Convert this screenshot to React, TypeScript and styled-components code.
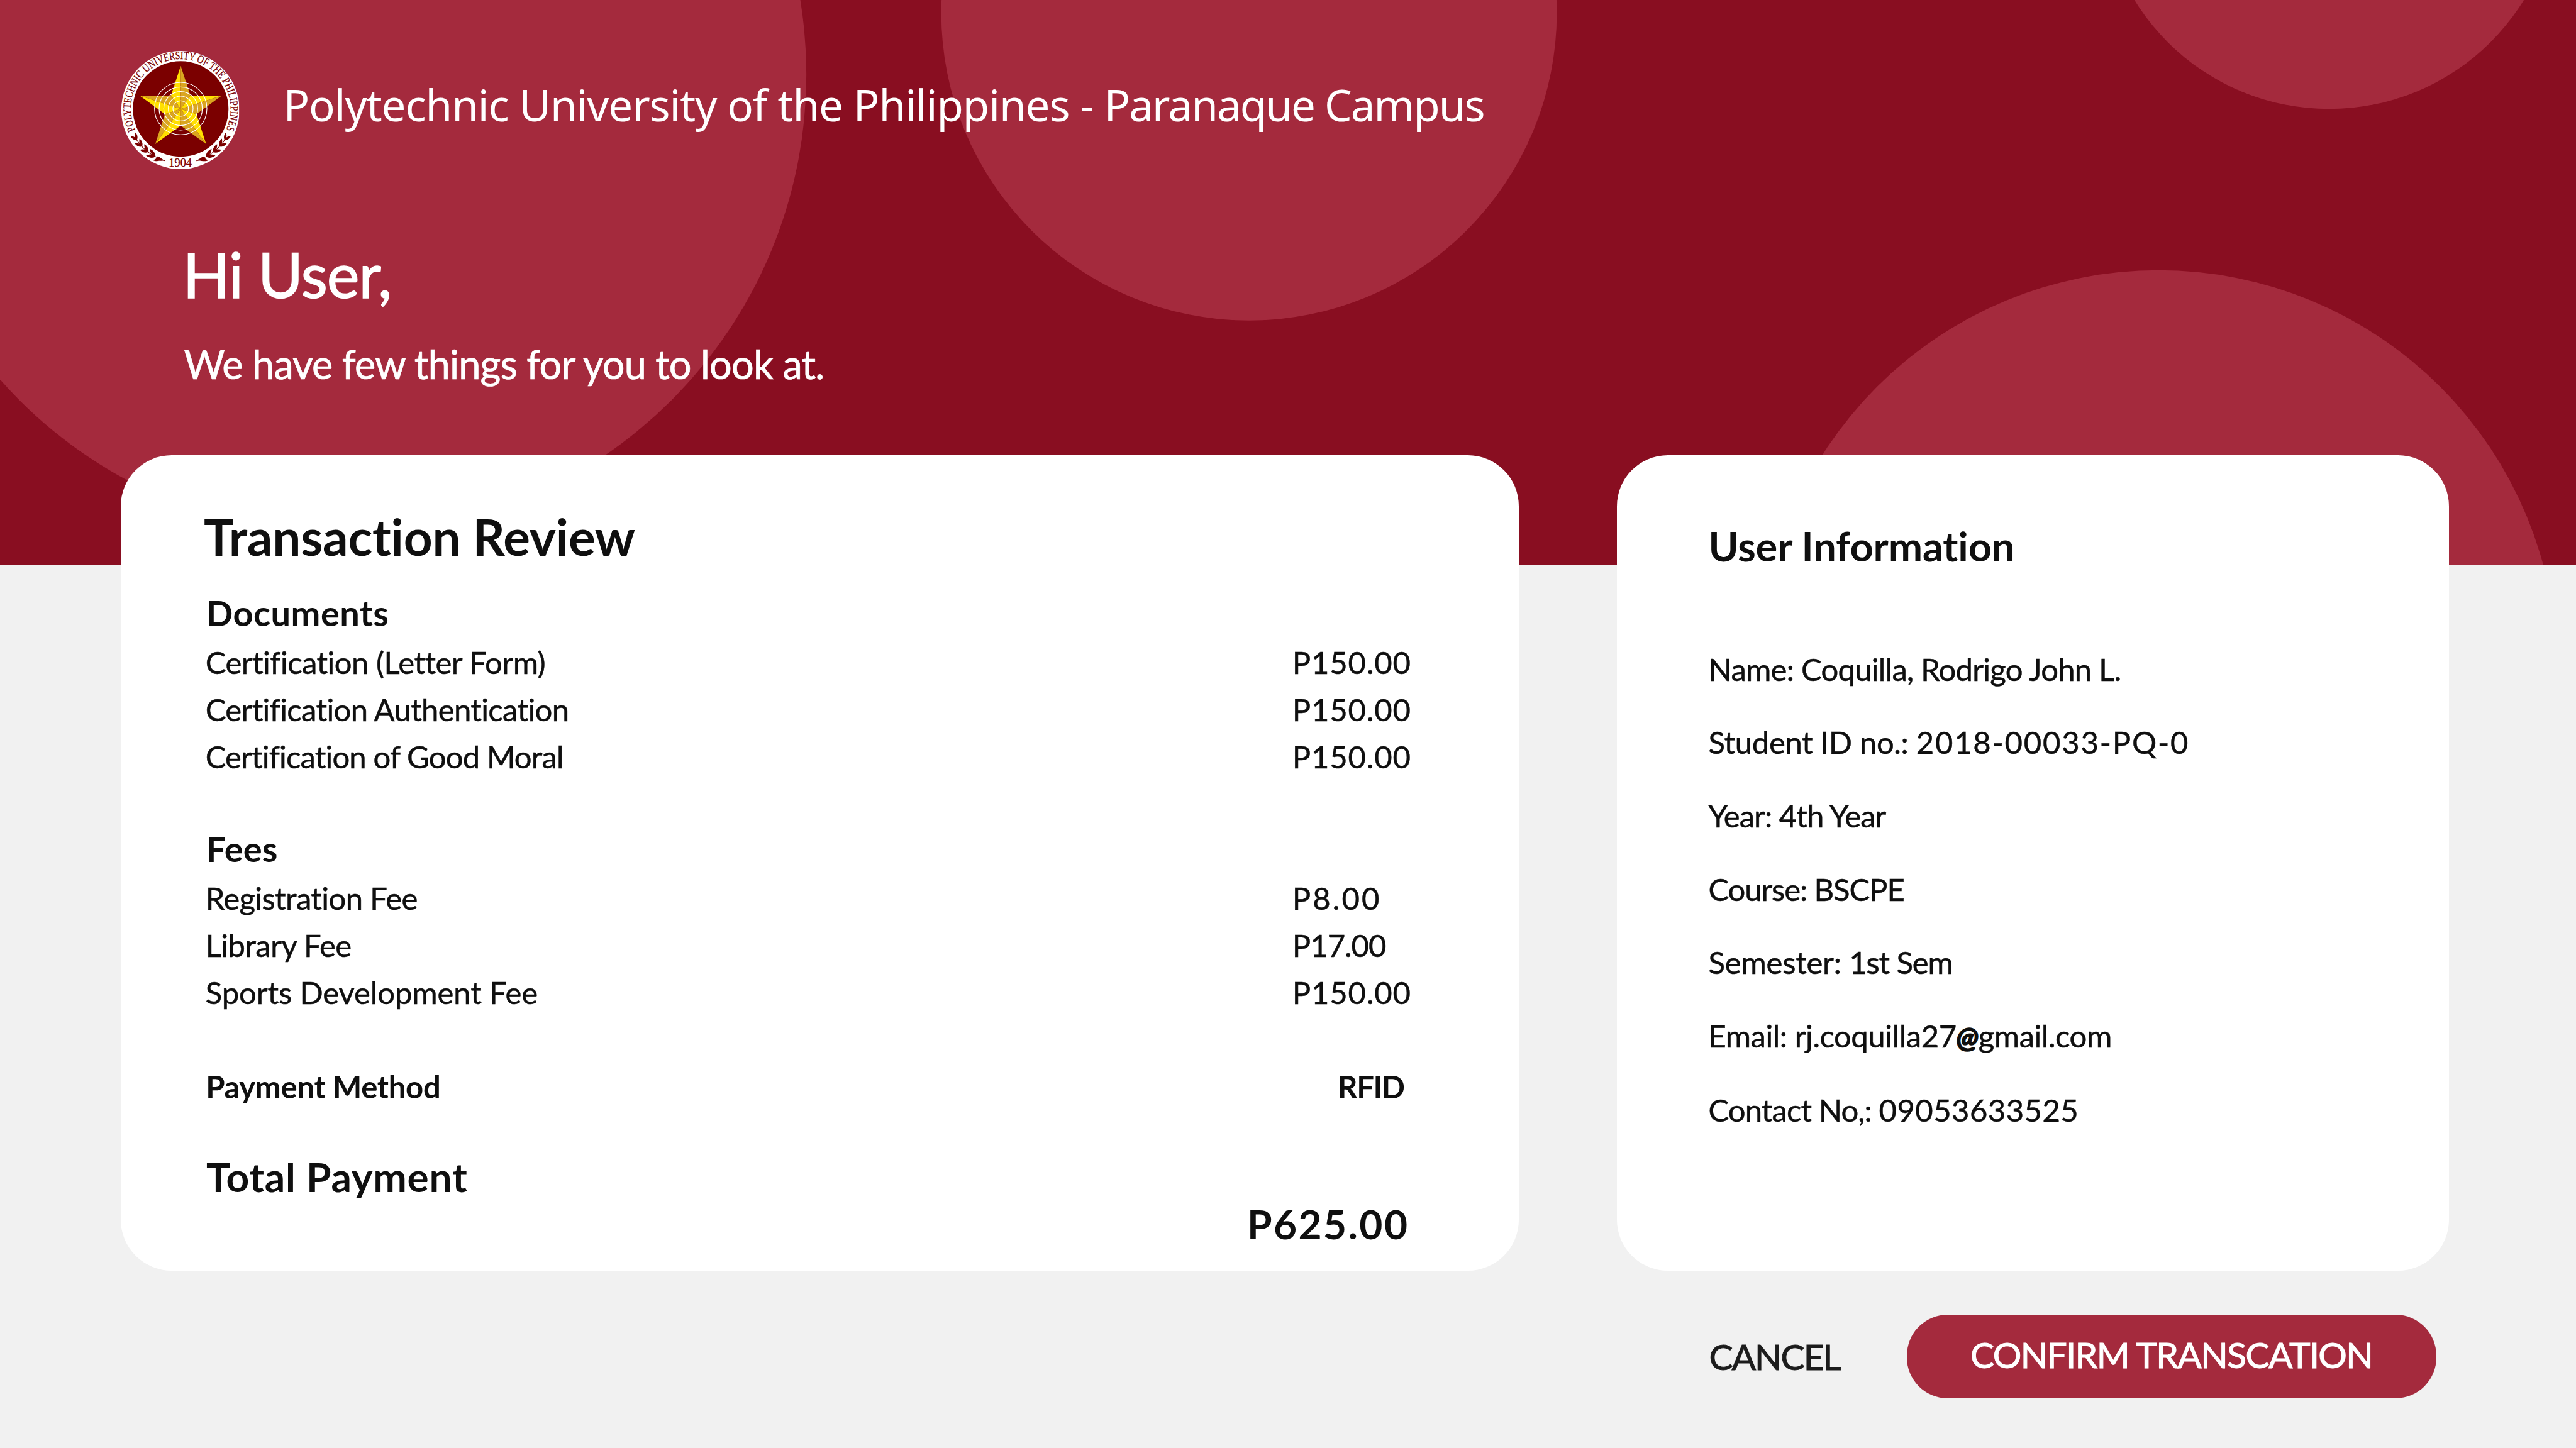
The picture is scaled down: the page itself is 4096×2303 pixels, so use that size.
import React from "react";
import styled, { createGlobalStyle } from "styled-components";

const color = {
  maroon: "#890e21",
  rose: "#a42a3d",
  page: "#f1f1f1",
  card: "#ffffff",
  ink: "#0f0f0f",
};

const GlobalStyle = createGlobalStyle`
  * { box-sizing: border-box; }
  body { margin: 0; background: ${color.page}; }
`;

const Page = styled.div`
  position: relative;
  display: flex;
  flex-direction: column;
  width: 4096px;
  height: 2303px;
  overflow: hidden;
  background: ${color.page};
  color: ${color.ink};
  font-family: Lato, "Open Sans", sans-serif;
  white-space: nowrap;
`;

const HeroArt = styled.svg`
  position: absolute;
  top: 0;
  left: 0;
  width: 4096px;
  height: 898.6px;
  background: ${color.maroon};
`;

const Brand = styled.header`
  position: relative;
  display: flex;
  align-items: center;
  height: 187px;
  margin: 80.9px 0 0 192.9px;
  gap: 70.5px;
`;

const SealSvg = styled.svg`
  flex: none;
  width: 187px;
  height: 187px;
  overflow: visible;
`;

const BrandName = styled.h1`
  margin: 0;
  padding-bottom: 16px;
  font: 400 69px/100px "Noto Sans", "Open Sans", sans-serif;
  letter-spacing: -1.04px;
  color: #fff;
`;

const Campus = styled.span`
  letter-spacing: -1.9px;
`;

const Greeting = styled.section`
  position: relative;
  height: 455.8px;
  padding: 109.2px 0 0 290.5px;
  color: #fff;
`;

const Hello = styled.h2`
  margin: 0;
  font-size: 98px;
  font-weight: 400;
  line-height: 118px;
  letter-spacing: -1.1px;
  -webkit-text-stroke: 1.4px currentColor;
`;

const Lead = styled.p`
  margin: 45.6px 0 0 2px;
  font-size: 63px;
  line-height: 76px;
  letter-spacing: -0.82px;
  -webkit-text-stroke: 0.7px currentColor;
`;

const Cards = styled.main`
  position: relative;
  display: flex;
  gap: 156px;
  height: 1297.6px;
  padding-left: 192.1px;
`;

const Card = styled.section`
  border-radius: 81px;
  background: ${color.card};
`;

const ReviewCard = styled(Card)`
  width: 2222.6px;
  padding: 81.4px 0 0 134.6px;
`;

const UserCard = styled(Card)`
  width: 1323.4px;
  padding: 104.9px 0 0 145.8px;
`;

const ReviewTitle = styled.h2`
  margin: 0 0 39.7px -2.8px;
  font-size: 80px;
  font-weight: 700;
  line-height: 96px;
  letter-spacing: -0.18px;
`;

const Line = styled.div<{ $amountWidth?: number }>`
  display: grid;
  grid-template-columns: 1fr ${(p) => p.$amountWidth ?? 359.9}px;
  align-items: center;
  height: 74.96px;
  font-size: 49px;
  line-height: 60px;
  -webkit-text-stroke: 0.5px currentColor;
`;

const StrongLine = styled(Line)`
  padding-left: 0.5px;
  font-weight: 700;
  -webkit-text-stroke: 0;
`;

const GroupTitle = styled.h3`
  display: flex;
  align-items: center;
  height: 74.96px;
  margin: 0;
  padding: 0 0 5.6px 1px;
  font-size: 56px;
  font-weight: 700;
  line-height: 66px;
`;

const TotalLine = styled(Line)`
  padding: 0 0 11.2px 1.3px;
  font-size: 64px;
  font-weight: 700;
  -webkit-text-stroke: 0;
`;

const Gap = styled.div`
  height: 74.96px;
`;

const Text = styled.span<{ $track?: number }>`
  letter-spacing: ${(p) => p.$track ?? 0}px;
`;

const UserTitle = styled.h2`
  margin: 0 0 99.2px;
  font-size: 65px;
  font-weight: 700;
  line-height: 78px;
  letter-spacing: -0.15px;
`;

const Detail = styled.p`
  margin: 0;
  font-size: 49px;
  line-height: 116.61px;
  -webkit-text-stroke: 0.5px currentColor;
`;

const AtSign = styled.b`
  font-weight: 900;
  font-size: 46px;
  font-style: italic;
  -webkit-text-stroke: 1.5px currentColor;
`;

const Actions = styled.footer`
  display: flex;
  align-items: center;
  justify-content: space-between;
  height: 133px;
  margin-top: 69.7px;
  padding: 0 221.9px 0 2717.4px;
`;

const Button = styled.button`
  border: 0;
  padding: 0;
  background: none;
  color: #1c1c1c;
  font: 400 57px/70px Lato, "Open Sans", sans-serif;
  letter-spacing: -2px;
  text-align: left;
  -webkit-text-stroke: 1px currentColor;
`;

const PrimaryButton = styled(Button)`
  width: 841.7px;
  height: 133px;
  padding: 0 0 6px 100.6px;
  border-radius: 65px;
  background: ${color.rose};
  color: #fff;
  letter-spacing: -1.62px;
`;

const bubbles = [
  { cx: 549.6, cy: 118.5, r: 733.2 },
  { cx: 1987, cy: 20.4, r: 489.6 },
  { cx: 3705.3, cy: -189.9, r: 363.3 },
  { cx: 3434, cy: 1063.8, r: 633.8 },
];

const C = { x: 292, y: 286 };
const polar = (r: number, deg: number, cx = C.x, cy = C.y) => {
  const a = (deg * Math.PI) / 180;
  return [cx + r * Math.cos(a), cy + r * Math.sin(a)] as const;
};
const pts = (list: (readonly [number, number])[]) =>
  list.map(([x, y]) => `${x.toFixed(1)},${y.toFixed(1)}`).join(" ");

function Laurel() {
  return (
    <g fill="#7b0000">
      <path d="M74 420Q118 500 217 533" fill="none" stroke="#7b0000" strokeWidth="3.5" />
      {[145, 136, 127, 118].map((deg, i) => {
        const [x, y] = polar(254, deg, 291, 288);
        const size = 0.95 + i * 0.08;
        return [-20, 28].map((turn) => (
          <path
            key={`${deg}${turn}`}
            d="M0 0C9 -10 23 -10 38 -2C25 7 11 7 0 0Z"
            transform={`translate(${x} ${y}) rotate(${deg + 90 + turn}) scale(${size})`}
          />
        ));
      })}
      <path d="M219 534C204 527 196 515 180 512C176 524 168 528 160 530C178 541 200 528 219 534Z" />
    </g>
  );
}

function Seal() {
  return (
    <SealSvg viewBox="9 9 561 561">
      <defs>
        <path id="sealArc" d="M76.3 386.6A238 238 0 1 1 507.7 386.6" />
        <clipPath id="sealEdge">
          <rect x="8" y="8" width="562.5" height="562" />
        </clipPath>
      </defs>
      <circle cx="290.5" cy="291" r="282" fill="#fff" clipPath="url(#sealEdge)" />
      <circle cx={C.x} cy={C.y} r="228" fill="#7b0000" />
      {[0, 1, 2, 3, 4].map((i) => {
        const tip = -90 + i * 72;
        return (
          <g key={i}>
            <polygon points={pts([[C.x, C.y], polar(206, tip), polar(79, tip - 36)])} fill="#ffe000" />
            <polygon points={pts([[C.x, C.y], polar(206, tip), polar(79, tip + 36)])} fill="#daa520" />
          </g>
        );
      })}
      {[125, 103, 81, 59, 37].map((r) => (
        <circle key={r} cx={C.x} cy="284" r={r} fill="none" stroke="#fff" strokeWidth="3.5" />
      ))}
      <text
        fill="#7b0000"
        stroke="#7b0000"
        strokeWidth="0.8"
        fontFamily="'Liberation Serif', serif"
        fontSize="53"
      >
        <textPath href="#sealArc" textLength="953" lengthAdjust="spacingAndGlyphs">
          POLYTECHNIC UNIVERSITY OF THE PHILIPPINES
        </textPath>
      </text>
      <text
        x="235"
        y="561"
        fill="#7b0000"
        stroke="#7b0000"
        strokeWidth="0.8"
        fontFamily="'Liberation Serif', serif"
        fontSize="55"
        textLength="110"
      >
        1904
      </text>
      <Laurel />
      <g transform="translate(584 0) scale(-1 1)">
        <Laurel />
      </g>
    </SealSvg>
  );
}

type Entry = { name: string; track: number; price: string; priceTrack: number };

const documents: Entry[] = [
  { name: "Certification (Letter Form)", track: -0.53, price: "P150.00", priceTrack: 0.85 },
  { name: "Certification Authentication", track: -0.65, price: "P150.00", priceTrack: 0.85 },
  { name: "Certification of Good Moral", track: -0.84, price: "P150.00", priceTrack: 0.85 },
];

const fees: Entry[] = [
  { name: "Registration Fee", track: -0.6, price: "P8.00", priceTrack: 3.1 },
  { name: "Library Fee", track: -0.54, price: "P17.00", priceTrack: -1 },
  { name: "Sports Development Fee", track: -0.1, price: "P150.00", priceTrack: 0.85 },
];

function Entries({ items }: { items: Entry[] }) {
  return (
    <>
      {items.map((e) => (
        <Line key={e.name}>
          <Text $track={e.track}>{e.name}</Text>
          <Text $track={e.priceTrack}>{e.price}</Text>
        </Line>
      ))}
    </>
  );
}

export default function App() {
  return (
    <Page>
      <GlobalStyle />
      <HeroArt viewBox="0 0 4098 899" preserveAspectRatio="none">
        {bubbles.map((b) => (
          <circle key={b.cx} {...b} fill={color.rose} />
        ))}
      </HeroArt>

      <Brand>
        <Seal />
        <BrandName>
          Polytechnic University of the Philippines - <Campus>Paranaque Campus</Campus>
        </BrandName>
      </Brand>

      <Greeting>
        <Hello>Hi User,</Hello>
        <Lead>We have few things for you to look at.</Lead>
      </Greeting>

      <Cards>
        <ReviewCard>
          <ReviewTitle>Transaction Review</ReviewTitle>
          <GroupTitle><Text $track={0.47}>Documents</Text></GroupTitle>
          <Entries items={documents} />
          <Gap />
          <GroupTitle>Fees</GroupTitle>
          <Entries items={fees} />
          <Gap />
          <StrongLine $amountWidth={287.7}>
            <Text $track={-0.3}>Payment Method</Text>
            <Text $track={-1.34}>RFID</Text>
          </StrongLine>
          <Gap />
          <TotalLine>
            <Text $track={0.75}>Total Payment</Text>
          </TotalLine>
          <TotalLine $amountWidth={431.8}>
            <span />
            <Text $track={2.45}>P625.00</Text>
          </TotalLine>
        </ReviewCard>

        <UserCard>
          <UserTitle>User Information</UserTitle>
          <Detail><Text $track={-0.75}>Name: Coquilla, Rodrigo John L.</Text></Detail>
          <Detail>
            <Text $track={-0.35}>Student ID no.: </Text>
            <Text $track={1.8}>2018-00033-PQ-0</Text>
          </Detail>
          <Detail><Text $track={-0.95}>Year: 4th Year</Text></Detail>
          <Detail><Text $track={-1.12}>Course: BSCPE</Text></Detail>
          <Detail>
            <Text $track={-0.2}>Semester: </Text>
            <Text $track={-1.1}>1st Sem</Text>
          </Detail>
          <Detail>
            <Text $track={-0.45}>Email: rj.coquilla27<AtSign>@</AtSign>gmail.com</Text>
          </Detail>
          <Detail>
            <Text $track={-0.9}>Contact No,: </Text>
            <Text $track={0.45}>09053633525</Text>
          </Detail>
        </UserCard>
      </Cards>

      <Actions>
        <Button>CANCEL</Button>
        <PrimaryButton>CONFIRM TRANSCATION</PrimaryButton>
      </Actions>
    </Page>
  );
}
